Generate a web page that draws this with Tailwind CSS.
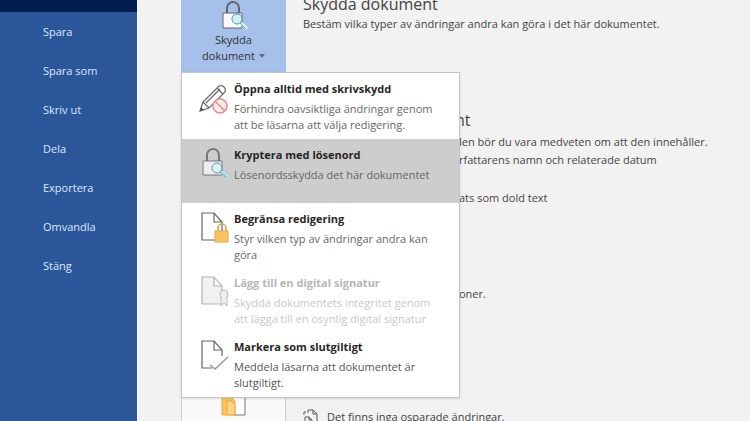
<!DOCTYPE html>
<html lang="sv">
<head>
  <meta charset="UTF-8" />
  <meta name="viewport" content="width=device-width, initial-scale=1.0" />
  <title>Skydda dokument</title>
  <script src="https://cdn.jsdelivr.net/npm/@tailwindcss/browser@4"></script>
</head>
<body class="flex h-screen overflow-hidden bg-[#f2f2f2] font-['Open_Sans',sans-serif] text-[11px] leading-4 text-[#444]">

  <!-- Sidebar -->
  <aside class="w-[138px] shrink-0 border-r border-[#fafcff] bg-[#2b579a]">
    <div class="h-3 bg-[#001e4e]"></div>
    <nav class="flex flex-col text-[#dce8fa]">
      <a href="#" class="flex h-[39px] items-center pl-[43px]">Spara</a>
      <a href="#" class="flex h-[39px] items-center pl-[43px]">Spara som</a>
      <a href="#" class="flex h-[39px] items-center pl-[43px]">Skriv ut</a>
      <a href="#" class="flex h-[39px] items-center pl-[43px]">Dela</a>
      <a href="#" class="flex h-[39px] items-center pl-[43px]">Exportera</a>
      <a href="#" class="flex h-[39px] items-center pl-[43px]">Omvandla</a>
      <a href="#" class="flex h-[39px] items-center pl-[43px]">Stäng</a>
    </nav>
  </aside>

  <main class="flex min-w-0 flex-1 gap-[17px] pl-[43px]">
    <div class="flex w-[105px] shrink-0 flex-col justify-between">
      <div class="relative">
        <button class="flex h-[72px] w-full flex-col items-center bg-[#a5c0ea] text-[#333]">
          <svg class="h-8 w-8 shrink-0" viewBox="0 0 32 32" fill="none">
            <path d="M9 13V8a6 6 0 0 1 12 0v5" stroke="#666" stroke-width="2" />
            <path d="M5 13h19v15H5z" fill="#fafafa" stroke="#666" />
            <circle cx="19" cy="19" r="5" fill="#d5f0f8" stroke="#4a9cc0" />
            <path d="m23 23 6 6" stroke="#e8faff" stroke-width="3" />
            <path d="m22 23 6 6" stroke="#4a9cc0" />
          </svg>
          <span>Skydda</span>
          <span class="flex items-center gap-1">dokument
            <svg class="h-1 w-1.5" viewBox="0 0 6 4"><path d="M0 0h6L3 4z" fill="#556b8d" /></svg>
          </span>
        </button>

        <!-- Dropdown -->
        <div class="absolute top-full left-0 z-10 flex w-[279px] flex-col border border-[#c6c6c6] bg-white shadow-sm">
          <button class="flex h-[66px] items-start gap-1 pt-2 pl-4 text-left">
            <svg class="mt-1 h-9 w-8 shrink-0" viewBox="0 0 32 36" fill="none">
              <path d="m2 26 3-9L21 1q3-1 5 1t1 5L11 23zM5 17l6 6M19 3l6 6M8 18 22 4" fill="#fff" stroke="#666" stroke-width="1.2" />
              <path d="m2 26 1-4 3 3z" fill="#555" />
              <circle cx="22" cy="21" r="7" fill="#fdecec" stroke="#e58c91" stroke-width="1.5" />
              <path d="m17 16 10 10" stroke="#e58c91" stroke-width="1.5" />
            </svg>
            <span class="flex flex-col gap-1">
              <b class="text-[#262626]">Öppna alltid med skrivskydd</b>
              <span class="text-[#666]">Förhindra oavsiktliga ändringar genom<br />att be läsarna att välja redigering.</span>
            </span>
          </button>
          <button class="flex h-16 items-start gap-1 bg-[#cdcdcd] pt-2 pl-4 text-left">
            <svg class="h-9 w-8 shrink-0" viewBox="0 0 32 36" fill="none">
              <path d="M9 14V8a6 6 0 0 1 12 0v6" stroke="#777" stroke-width="2" />
              <path d="M5 14h19v14H5z" fill="#eee" stroke="#777" />
              <circle cx="19" cy="21" r="5" fill="#dceff5" stroke="#559dbb" />
              <path d="m23 25 6 5" stroke="#b6e3f4" stroke-width="3" />
              <path d="m22 25 6 5" stroke="#559dbb" />
            </svg>
            <span class="flex flex-col gap-1">
              <b class="text-[#262626]">Kryptera med lösenord</b>
              <span class="text-[#666]">Lösenordsskydda det här dokumentet</span>
            </span>
          </button>
          <button class="flex h-16 items-start gap-1 pt-2 pl-4 text-left">
            <svg class="h-9 w-8 shrink-0" viewBox="0 0 32 36" fill="none">
              <path d="M4 2h12l8 9v18H4zM16 2v9h8" fill="#fff" stroke="#666" stroke-width="1.2" />
              <path d="M20 20v-3a4 4 0 0 1 8 0v3" stroke="#d4a254" stroke-width="1.5" />
              <path d="M17 20h13v11H17z" fill="#fbc463" stroke="#e6a93e" />
            </svg>
            <span class="flex flex-col gap-1">
              <b class="text-[#262626]">Begränsa redigering</b>
              <span class="text-[#666]">Styr vilken typ av ändringar andra kan<br />göra</span>
            </span>
          </button>
          <button disabled class="flex h-16 items-start gap-1 pt-2 pl-4 text-left">
            <svg class="h-9 w-8 shrink-0" viewBox="0 0 32 36" fill="none">
              <path d="M4 2h12l8 9v18H4zM16 2v9h8" fill="#f1f1f1" stroke="#b5b5b5" stroke-width="1.2" />
              <circle cx="26" cy="19" r="4" fill="#eee" stroke="#bbb" />
              <path d="M23 22v9l3-3 3 3v-9" fill="#eee" stroke="#bbb" />
            </svg>
            <span class="flex flex-col gap-1">
              <b class="text-[#b5b5b5]">Lägg till en digital signatur</b>
              <span class="text-[#c8c8c8]">Skydda dokumentets integritet genom<br />att lägga till en osynlig digital signatur</span>
            </span>
          </button>
          <button class="flex h-[66px] items-start gap-1 pt-2 pl-4 text-left">
            <svg class="h-9 w-8 shrink-0" viewBox="0 0 32 36" fill="none">
              <path d="M24 17v-6l-8-9H4v27h10M16 2v9h8" stroke="#666" stroke-width="1.2" />
              <path d="m12 26 5 4L30 18" stroke="#999" stroke-width="1.5" />
            </svg>
            <span class="flex flex-col gap-1">
              <b class="text-[#262626]">Markera som slutgiltigt</b>
              <span class="text-[#555]">Meddela läsarna att dokumentet är<br />slutgiltigt.</span>
            </span>
          </button>
        </div>
      </div>

      <button aria-label="Hantera dokument" class="flex h-9 justify-center border-x border-[#d0d0d0] bg-[#fafafa] pt-3">
        <svg class="h-5 w-7" viewBox="0 0 28 20" fill="none">
          <path d="M14 0h11v18H14" fill="#fff" stroke="#777" />
          <path d="M2 0h9l4 4v14H2z" fill="#fbc463" stroke="#eaa93a" />
          <path d="M7 18V4h4l4 4v10z" fill="#fcd384" stroke="#eaa93a" />
        </svg>
      </button>
    </div>

    <div class="flex min-w-0 flex-1 flex-col whitespace-nowrap">
      <section>
        <h2 class="-mt-2 text-[16px] leading-6">Skydda dokument</h2>
        <p>Bestäm vilka typer av ändringar andra kan göra i det här dokumentet.</p>
      </section>
      <section class="mt-[76px] pl-[156px]">
        <h2 class="-ml-1 text-[16px] leading-6">nt</h2>
        <p class="mt-0.5">len bör du vara medveten om att den innehåller.</p>
        <p class="mt-0.5">rfattarens namn och relaterade datum</p>
        <p class="mt-[22px]">ats som dold text</p>
      </section>
      <p class="mt-20 pl-[156px]">oner.</p>
      <div class="mt-auto -mb-1 flex items-center gap-2">
        <svg class="h-4 w-4" viewBox="0 0 16 16" fill="none" stroke="#555">
          <path d="M5 4V1h5l4 4v10H8M10 1v4h4" />
          <path d="M2 15V8h4l3 3v4M6 8v3h3M1 6V3h2" />
        </svg>
        <p>Det finns inga osparade ändringar.</p>
      </div>
    </div>
  </main>
</body>
</html>
